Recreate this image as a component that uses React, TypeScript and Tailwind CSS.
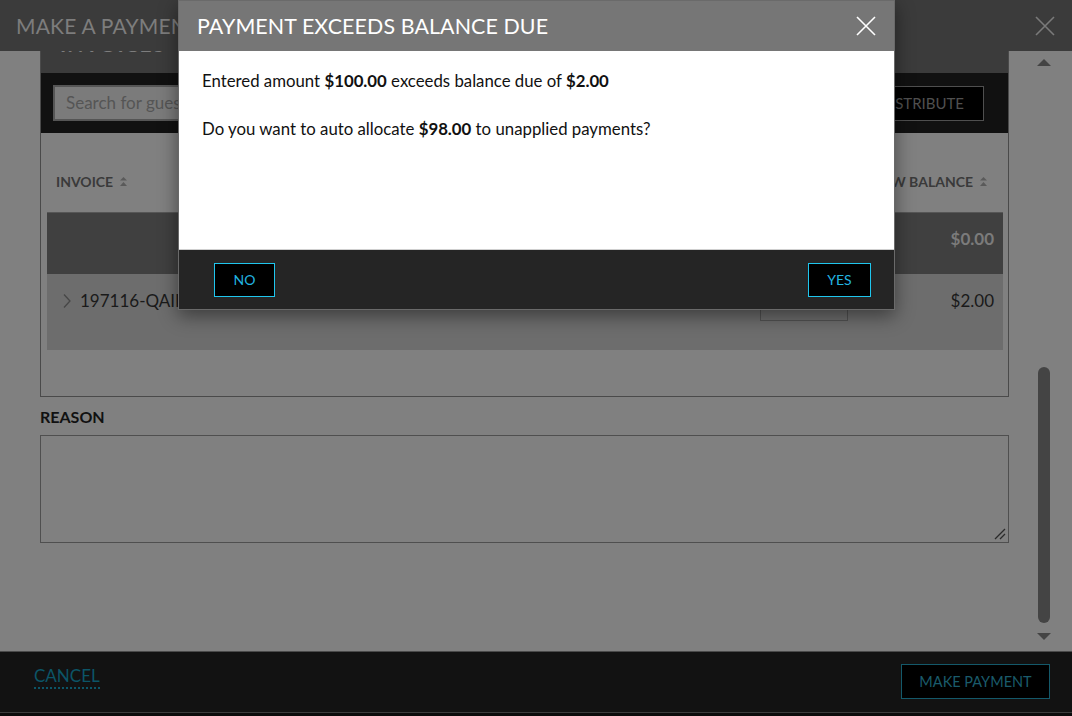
import React from "react";

const XIcon = ({ color, size = 20 }: { color: string; size?: number }) => (
  <svg width={size} height={size} viewBox="0 0 20 20" fill="none">
    <path d="M1 1 L19 19 M19 1 L1 19" stroke={color} strokeWidth="1.6" />
  </svg>
);

const SortIcon = () => (
  <svg width="9" height="12" viewBox="0 0 9 12" className="ml-[6px]">
    <path d="M4.5 1 L8 4.5 H1 Z" fill="#5a5a5a" />
    <path d="M4.5 6 L8 10 H1 Z" fill="#5a5a5a" />
  </svg>
);

export default function App() {
  return (
    <div
      className="relative w-[1072px] h-[716px] overflow-hidden flex flex-col bg-[#808080]"
      style={{ fontFamily: "Lato, 'Open Sans', sans-serif" }}
    >
      {/* Underlying page header */}
      <div className="h-[51px] shrink-0 bg-[#3b3b3b] flex items-center justify-between pl-[16px] pr-[17px]">
        <div className="text-[21px] text-[#7d7d7d] tracking-[0.2px]">MAKE A PAYMENT</div>
        <XIcon color="#7a7a7a" />
      </div>

      {/* Body */}
      <div className="h-[600px] shrink-0 bg-[#808080] flex">
        <div className="pl-[40px] w-[1009px] flex flex-col">
          {/* Invoice panel */}
          <div className="w-[969px] h-[346px] border-l border-r border-b border-[#4a4a4a] flex flex-col">
            <div className="h-[22px] bg-[#3b3b3b] overflow-hidden">
              <div className="ml-[19px] mt-[-20px] h-[26px] text-[21px] leading-[26px] font-bold text-[#7d7d7d] tracking-[1px]">
                INVOICES
              </div>
            </div>
            <div className="h-[60px] bg-[#111111] flex items-center justify-between pl-[12px] pr-[24px]">
              <div className="w-[420px] h-[36px] border-2 border-[#555] bg-[#7b7b7b] flex items-center px-[11px] text-[17px] text-[#555]">
                Search for guest or invoice
              </div>
              <div className="h-[35px] px-[19px] bg-black border border-[#4f4f4f] flex items-center text-[15px] text-[#505050]">
                DISTRIBUTE
              </div>
            </div>
            <div className="flex-1 flex flex-col">
              <div className="h-[79px] pt-[18px] flex items-center justify-between pl-[15px] pr-[20px]">
                <div className="flex items-center text-[14px] font-bold text-[#3a3a3a]">
                  INVOICE <SortIcon />
                </div>
                <div className="flex items-center text-[14px] font-bold text-[#3a3a3a]">
                  NEW BALANCE <SortIcon />
                </div>
              </div>
              <div className="ml-[6px] mr-[5px] flex flex-col">
                <div className="h-[62px] bg-[#404040] border-t border-[#565656] flex items-start justify-end pt-[13px] pr-[9px] text-[17px] font-bold text-[#7b7b7b]">
                  $0.00
                </div>
                <div className="h-[76px] bg-[#6d6d6d] flex items-start pt-[16px] pl-[15px] pr-[9px]">
                  <div className="flex items-center h-[22px]">
                    <svg width="10" height="16" viewBox="0 0 10 16" fill="none">
                      <path d="M2 1.5 L8 8 L2 14.5" stroke="#474747" strokeWidth="1.3" />
                    </svg>
                    <span className="ml-[8px] text-[17px] text-[#1a1a1a]">197116-QAII Guest</span>
                  </div>
                  <div className="flex-1" />
                  <div className="w-[88px] h-[36px] mt-[-5px] border border-[#525252] mr-[103px]" />
                  <div className="text-[17px] text-[#1a1a1a] h-[22px] flex items-center">$2.00</div>
                </div>
              </div>
            </div>
          </div>
          <div className="mt-[10px] h-[20px] flex items-center text-[16px] font-bold text-[#111]">REASON</div>
          <div className="mt-[8px] w-[969px] h-[108px] border border-[#4f4f4f] relative">
            <svg
              width="12"
              height="12"
              viewBox="0 0 12 12"
              className="absolute right-[2px] bottom-[2px]"
              fill="none"
            >
              <path d="M1 11 L11 1 M6 11 L11 6" stroke="#2a2a2a" strokeWidth="1.3" />
            </svg>
          </div>
        </div>
        {/* Scrollbar */}
        <div className="ml-[28px] w-[14px] flex flex-col items-center">
          <svg width="14" height="8" viewBox="0 0 14 8" className="mt-[8px]">
            <path d="M7 0 L14 7 H0 Z" fill="#444" />
          </svg>
          <div className="flex-1" />
          <div className="w-[12px] h-[256px] rounded-full bg-[#444]" />
          <svg width="14" height="8" viewBox="0 0 14 8" className="mt-[10px] mb-[10px]">
            <path d="M0 0 H14 L7 7 Z" fill="#444" />
          </svg>
        </div>
      </div>

      {/* Footer */}
      <div className="flex-1 bg-[#0b0b0b] flex flex-col">
        <div className="h-[61px] bg-[#121212] border-t border-[#4a4a4a] flex items-center justify-between pl-[34px] pr-[22px]">
          <div className="text-[17px] text-[#0c5567] border-b-2 border-dotted border-[#0c5567] leading-[18px] pb-[2px] mt-[-9px]">
            CANCEL
          </div>
          <div className="w-[149px] h-[35px] border border-[#14596a] bg-black flex items-center justify-center text-[14.5px] text-[#1a5b6b] mt-[-1px]">
            MAKE PAYMENT
          </div>
        </div>
        <div className="h-[1px] bg-[#3c3c3c]" />
      </div>

      {/* Modal dialog */}
      <div className="absolute left-[178px] top-0 w-[717px] h-[310px] border border-[#6a6a6a] flex flex-col shadow-[0_6px_18px_rgba(0,0,0,0.45)]">
        <div className="h-[50px] bg-[#767676] flex items-center justify-between pl-[18px] pr-[18px]">
          <div className="text-[21.4px] text-white tracking-[0.1px]">PAYMENT EXCEEDS BALANCE DUE</div>
          <XIcon color="#ffffff" />
        </div>
        <div className="h-[198px] bg-white pl-[23px] pt-[18px] text-[16.8px] text-[#111]">
          <div className="leading-[24px]">
            Entered amount <b>$100.00</b> exceeds balance due of <b>$2.00</b>
          </div>
          <div className="leading-[24px] mt-[24px]">
            Do you want to auto allocate <b>$98.00</b> to unapplied payments?
          </div>
        </div>
        <div className="flex-1 bg-[#252525] border-t border-[#cfcfcf] flex items-center justify-between pl-[35px] pr-[23px]">
          <div className="w-[61px] h-[34px] bg-black border border-[#1fc6ee] flex items-center justify-center text-[14px] text-[#22b4e0]">
            NO
          </div>
          <div className="w-[63px] h-[34px] bg-black border border-[#1fc6ee] flex items-center justify-center text-[14px] text-[#22b4e0]">
            YES
          </div>
        </div>
      </div>
    </div>
  );
}
